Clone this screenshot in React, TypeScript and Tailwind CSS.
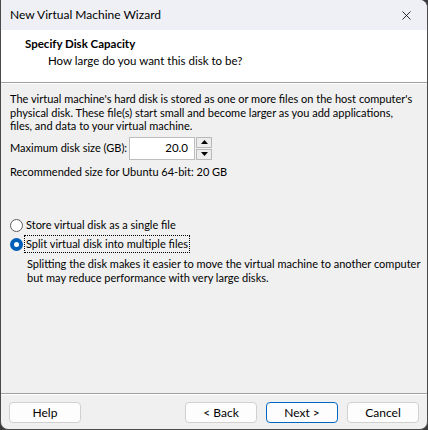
import { X } from 'lucide-react';

const font = { fontFamily: 'Lato, "Noto Sans", Arial, sans-serif' };

const WizardButton = ({ label, primary = false }: { label: string; primary?: boolean }) => (
  <button
    className={`h-[21px] w-[72px] rounded-[4px] border bg-[#fdfdfd] text-[12px] text-black leading-none ${
      primary ? 'border-[#0067c0]' : 'border-[#d0d0d0]'
    }`}
  >
    {label}
  </button>
);

const Radio = ({ checked, label }: { checked?: boolean; label: string }) => (
  <div className="flex h-[19px] items-center">
    <span
      className={`flex h-[13px] w-[13px] shrink-0 items-center justify-center rounded-full ${
        checked ? 'bg-[#005fb8]' : 'border border-[#5c5c5c] bg-white'
      }`}
    >
      {checked && <span className="h-[5px] w-[5px] rounded-full bg-white" />}
    </span>
    <span
      className={`ml-[2px] px-[1px] leading-[16px] ${checked ? 'outline-1 outline-dotted outline-black' : 'outline-none'}`}
    >
      {label}
    </span>
  </div>
);

export default function App() {
  return (
    <div className="h-[430px] w-[428px] bg-[#3a3a3a]" style={font}>
      <div className="flex h-full flex-col overflow-hidden rounded-tr-[8px] rounded-b-[8px] border-x border-b border-[#4a4a4a] bg-[#f0f0f0] text-[11px] text-black">
        {/* title bar */}
        <div className="flex h-[30px] shrink-0 items-center justify-between bg-[#eff0f6] pl-[9px] pr-[13px]">
          <span className="text-[12px]">New Virtual Machine Wizard</span>
          <X size={15} strokeWidth={1.3} className="text-black" />
        </div>

        {/* header */}
        <div className="h-[53px] shrink-0 border-b border-[#a0a0a0] bg-white pl-[24px] pt-[6px]">
          <div className="text-[11.5px] font-bold leading-[16px]">Specify Disk Capacity</div>
          <div className="mt-[1px] pl-[23px] text-[11.5px] leading-[16px]">How large do you want this disk to be?</div>
        </div>

        {/* body */}
        <div className="flex-1 border-t border-white px-[9px] pt-[8px]">
          <p className="whitespace-nowrap leading-[13.5px]">
            The virtual machine's hard disk is stored as one or more files on the host computer's
            <br />
            physical disk. These file(s) start small and become larger as you add applications,
            <br />
            files, and data to your virtual machine.
          </p>

          <div className="mt-[4px] flex items-center">
            <span className="w-[119px] shrink-0 whitespace-nowrap">Maximum disk size (GB):</span>
            <div className="flex h-[23px] w-[66px] items-center justify-end border border-[#bdbdbd] bg-white pr-[6px] text-[11.5px]">
              20.0
            </div>
            <div className="ml-[1px] flex h-[23px] w-[16px] flex-col gap-[1px]">
              <div className="flex flex-1 items-center justify-center border border-[#b9b9b9] bg-[#ececec]">
                <svg width="7" height="4" viewBox="0 0 7 4">
                  <path d="M0 4 L3.5 0 L7 4 Z" fill="#000" />
                </svg>
              </div>
              <div className="flex flex-1 items-center justify-center border border-[#b9b9b9] bg-[#ececec]">
                <svg width="7" height="4" viewBox="0 0 7 4">
                  <path d="M0 0 L3.5 4 L7 0 Z" fill="#000" />
                </svg>
              </div>
            </div>
          </div>

          <div className="mt-[4px] leading-[16px]">Recommended size for Ubuntu 64-bit: 20 GB</div>

          <div className="mt-[36px] flex flex-col">
            <Radio label="Store virtual disk as a single file" />
            <Radio checked label="Split virtual disk into multiple files" />
            <p className="mt-[3px] whitespace-nowrap pl-[17px] leading-[14px]">
              Splitting the disk makes it easier to move the virtual machine to another computer
              <br />
              but may reduce performance with very large disks.
            </p>
          </div>
        </div>

        {/* footer */}
        <div className="h-[36px] shrink-0 border-t border-[#a0a0a0]">
          <div className="flex h-full items-start border-t border-white px-[8px] pt-[7px]">
            <WizardButton label="Help" />
            <div className="ml-auto flex gap-[9px]">
              <WizardButton label="< Back" />
              <WizardButton label="Next >" primary />
              <WizardButton label="Cancel" />
            </div>
          </div>
        </div>
      </div>
    </div>
  );
}
